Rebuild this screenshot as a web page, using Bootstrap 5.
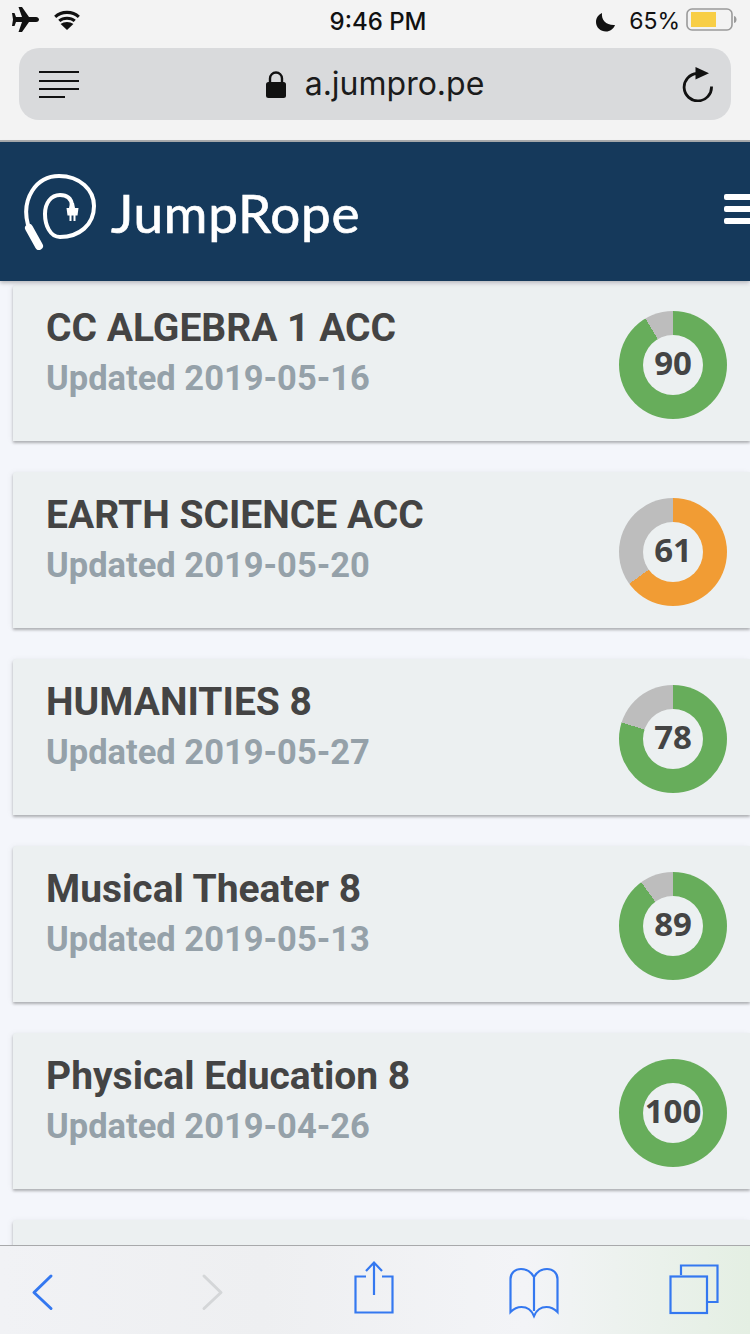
<!DOCTYPE html>
<html lang="en">
<head>
<meta charset="utf-8">
<title>JumpRope</title>
<link href="https://cdn.jsdelivr.net/npm/bootstrap@5.3.0/dist/css/bootstrap.min.css" rel="stylesheet">
<style>
html,body{margin:0;height:1334px;overflow:hidden;background:#f4f6fb}
.jr-page{width:750px;height:1334px;overflow:hidden}
.jr-top{height:142px;background:#f3f3f3;border-bottom:2px solid #a9acae}
.jr-status{height:48px;padding:0 12px 8px 12px;font-family:Inter,"Liberation Sans",sans-serif;color:#111}
.jr-time{font-size:24px;font-weight:500;width:756px;text-align:center;left:0;top:8px;line-height:28px}
.jr-stat-r{font-size:23px;line-height:26px;margin-top:8px;margin-left:auto}
.jr-url{height:72px;margin:0 19px;background:#d9dadc;border-radius:20px;font-family:Inter,"Liberation Sans",sans-serif;font-size:32px;color:#1b1b1b;padding:0 18px 0 20px}
.jr-url-center{gap:18px;margin-right:12px}
.jr-nav{height:139px;background:#15395b;padding:0 0 0 24px;color:#fff;box-shadow:0 2px 4px rgba(0,0,0,.25);z-index:2}
.jr-brand{font-family:Lato,"Open Sans",sans-serif;font-size:53px;letter-spacing:.8px;line-height:1;margin-left:15px;margin-top:1px;color:#fff;-webkit-text-stroke:.7px #fff}
.jr-burger{width:26px;margin-left:auto;gap:6px;margin-top:-6px}
.jr-burger span{display:block;height:6px;background:#fff;border-radius:2px 0 0 2px}
.jr-list{flex:1 1 0;overflow:hidden;padding:4px 0 0 13px;gap:31px;min-height:0}
.jr-item{height:156px;flex:none;background:#ecf0f1;box-shadow:0 2px 3px rgba(0,0,0,.28),-2px 0 6px rgba(0,0,0,.04);padding:21px 23px 0 33px;border-radius:3px 0 0 0}
.jr-name{font-family:Roboto,"Liberation Sans",sans-serif;font-weight:700;font-size:39px;line-height:44px;color:#444}
.jr-date{font-family:Roboto,"Liberation Sans",sans-serif;font-weight:700;font-size:34.500px;line-height:40px;color:#95a1a9;margin-top:8px}
.jr-donut{width:108px;height:108px;border-radius:50%;background:conic-gradient(var(--c) calc(var(--v)*1%),#bdbdbd 0);margin-top:5px;flex:none}
.jr-hole{width:60px;height:60px;border-radius:50%;background:#ecf0f1;font-family:"Open Sans",Roboto,sans-serif;font-weight:700;font-size:33px;line-height:1;color:#444;padding-bottom:5px}
.jr-green{--c:#67ad5b}.jr-orange{--c:#f19c34}
.jr-bottom{height:89px;background:linear-gradient(90deg,#f1f2f5 0,#eeeff1 35%,#f3f4f7 70%,#e4efe3 100%);border-top:1px solid #a8a9ab;z-index:3}
.jr-bottom svg{display:block}
</style>
</head>
<body>
<div class="jr-page d-flex flex-column">
  <header class="jr-top flex-shrink-0">
    <div class="jr-status d-flex position-relative">
      <svg width="27" height="25" viewBox="12 7 27 25" class="flex-shrink-0" style="margin-top:7px" fill="#111" aria-hidden="true"><path d="M18.500 7H22l7 10h7c2 0 3 1.500 3 2.500S38 22 36 22h-7l-7 10h-3.500L22 22h-6l-1.500 4H12l1-6.500L12 13h2.500l1.500 4h6z"/></svg>
      <svg width="28" height="20" viewBox="0 0 30 22" class="flex-shrink-0" style="margin:10px 0 0 14px" fill="none" stroke="#111" stroke-width="3.400" aria-hidden="true"><path d="M2 7.500c7-6.500 19-6.500 26 0M6.500 12c4.500-4 12.500-4 17 0"/><path d="M15 22l-7-6.500c3.500-3 10.500-3 14 0z" fill="#111" stroke="none"/></svg>
      <div class="jr-time position-absolute">9:46 PM</div>
      <div class="jr-stat-r d-flex align-items-start">
        <svg width="21" height="21" viewBox="0 0 21 21" fill="#111" class="mt-1" aria-hidden="true"><path d="M7 1c-.8 7 4 12.500 13 12-1.500 4-5 6.500-9 6.500C5.500 19.500 1 15.500 1 10 1 6 3.500 2.500 7 1z"/></svg>
        <span style="margin-left:13px">65%</span>
        <svg width="52" height="24" viewBox="0 0 52 24" style="margin-left:6px" aria-hidden="true"><rect x="1" y="1" width="45" height="21" rx="5" fill="none" stroke="#9a9a9a" stroke-width="1.600"/><rect x="5" y="4" width="25" height="15" fill="#f8ce46"/><path d="M48 8c2 .5 2.500 2 2.500 3.500S50 14.500 48 15z" fill="#9a9a9a"/></svg>
      </div>
    </div>
    <div class="jr-url d-flex align-items-center justify-content-between">
      <svg width="40" height="28" viewBox="0 0 40 28" stroke="#111" stroke-width="2" aria-hidden="true"><path d="M0 2h40M0 11h40M0 19h40M0 27h26"/></svg>
      <div class="jr-url-center d-flex align-items-center">
        <svg width="22" height="27" viewBox="0 0 22 27" aria-hidden="true"><path d="M5 12V7.500a6 6 0 0 1 12 0V12" fill="none" stroke="#111" stroke-width="2.400"/><rect x="1" y="11" width="20" height="16" rx="2.500" fill="#111"/></svg>
        <span>a.jumpro.pe</span>
      </div>
      <svg width="31" height="35" viewBox="0 0 31 35" fill="none" aria-hidden="true"><path d="M15 6.500A13.700 13.700 0 1 0 29.500 19.500" stroke="#111" stroke-width="2.800"/><path d="M13.500 0L27 6.200 13.500 12.500z" fill="#111"/></svg>
    </div>
  </header>

  <nav class="jr-nav d-flex align-items-center flex-shrink-0 position-relative">
    <svg width="72" height="76" viewBox="24 181 72 76" fill="none" class="flex-shrink-0" aria-hidden="true">
      <path d="M28 232C21 206 36 183 59 183 80 183 94 197 94 213 94 232 79 244 60 244 50 244 45 232 45 221 45 210 51 202 60 202 66 202 71 204 72 212" stroke="#fff" stroke-width="4"/>
      <path d="M29 235l10 18" stroke="#fff" stroke-width="8" stroke-linecap="round"/>
      <path d="M70 210h4l1 5h3.500l-1 7.500h-2v5.500h-2v-5.500h-2v5.500h-2v-5.500h-2l-1-7.500H69z" fill="#fff"/>
    </svg>
    <span class="jr-brand">JumpRope</span>
    <div class="jr-burger d-flex flex-column"><span></span><span></span><span></span></div>
  </nav>

  <main class="jr-list d-flex flex-column">
    <div class="jr-item d-flex justify-content-between"><div><div class="jr-name">CC ALGEBRA 1 ACC</div><div class="jr-date">Updated 2019-05-16</div></div><div class="jr-donut jr-green d-flex align-items-center justify-content-center" style="--v:91.500"><div class="jr-hole d-flex align-items-center justify-content-center">90</div></div></div>
    <div class="jr-item d-flex justify-content-between"><div><div class="jr-name">EARTH SCIENCE ACC</div><div class="jr-date">Updated 2019-05-20</div></div><div class="jr-donut jr-orange d-flex align-items-center justify-content-center" style="--v:65"><div class="jr-hole d-flex align-items-center justify-content-center">61</div></div></div>
    <div class="jr-item d-flex justify-content-between"><div><div class="jr-name">HUMANITIES 8</div><div class="jr-date">Updated 2019-05-27</div></div><div class="jr-donut jr-green d-flex align-items-center justify-content-center" style="--v:80"><div class="jr-hole d-flex align-items-center justify-content-center">78</div></div></div>
    <div class="jr-item d-flex justify-content-between"><div><div class="jr-name">Musical Theater 8</div><div class="jr-date">Updated 2019-05-13</div></div><div class="jr-donut jr-green d-flex align-items-center justify-content-center" style="--v:90"><div class="jr-hole d-flex align-items-center justify-content-center">89</div></div></div>
    <div class="jr-item d-flex justify-content-between"><div><div class="jr-name">Physical Education 8</div><div class="jr-date">Updated 2019-04-26</div></div><div class="jr-donut jr-green d-flex align-items-center justify-content-center" style="--v:100"><div class="jr-hole d-flex align-items-center justify-content-center">100</div></div></div>
    <div class="jr-item"></div>
  </main>

  <footer class="jr-bottom flex-shrink-0 d-flex position-relative">
    <svg width="750" height="88" viewBox="0 1246 750 88" fill="none" stroke="#3478f0" stroke-width="2.200" aria-hidden="true">
      <path d="M51 1276l-17 16.500 17 16" stroke-width="3" stroke-linecap="round" stroke-linejoin="round"/>
      <path d="M204 1276l17 16.500-17 16" stroke="#d4d6d8" stroke-width="3" stroke-linecap="round" stroke-linejoin="round"/>
      <path d="M366 1276.500h-10.500v36h37v-36H382"/>
      <path d="M374 1295v-32M366 1271l8-8.500 8 8.500"/>
      <path d="M534 1277c-3-5-8-8-13-8-6 0-10.500 4-10.500 10v33c4-4 8-5 11-5 5 0 10 3 12.500 9 2.500-6 7.500-9 12.500-9 3 0 7 1 11 5v-33c0-6-4.500-10-10.500-10-5 0-10 3-13 8zM534 1277v34"/>
      <rect x="670.500" y="1276.500" width="36.500" height="36.500"/>
      <path d="M681 1275v-9.500h36.500v36.500H708"/>
    </svg>
  </footer>
</div>
<script src="https://cdn.jsdelivr.net/npm/bootstrap@5.3.0/dist/js/bootstrap.bundle.min.js"></script>
</body>
</html>
